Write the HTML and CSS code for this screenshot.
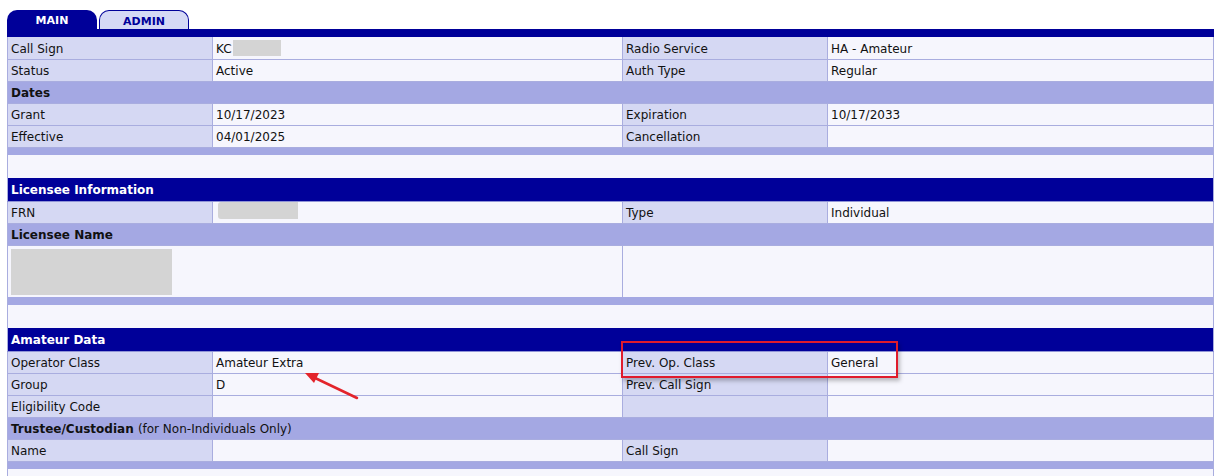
FILE: index.html
```html
<!DOCTYPE html>
<html>
<head>
<meta charset="utf-8">
<link rel="stylesheet" href="styles.css">
</head>
<body>
<div class="page">
  <div class="tabs">
    <div class="tab tab-active">MAIN</div>
    <div class="tab tab-inactive">ADMIN</div>
  </div>
  <div class="topbar"></div>
  <table class="lic">
    <colgroup>
      <col class="c1"><col class="c2"><col class="c3"><col class="c4">
    </colgroup>
    <tr><td class="lbl">Call Sign</td><td class="val">KC<span class="redact r-call"></span></td><td class="lbl">Radio Service</td><td class="val">HA - Amateur</td></tr>
    <tr><td class="lbl">Status</td><td class="val">Active</td><td class="lbl">Auth Type</td><td class="val">Regular</td></tr>
    <tr><td class="sub" colspan="4">Dates</td></tr>
    <tr><td class="lbl">Grant</td><td class="val">10/17/2023</td><td class="lbl">Expiration</td><td class="val">10/17/2033</td></tr>
    <tr><td class="lbl">Effective</td><td class="val">04/01/2025</td><td class="lbl">Cancellation</td><td class="val"></td></tr>
    <tr class="strip"><td colspan="4"></td></tr>
    <tr class="gap"><td colspan="4"></td></tr>
    <tr><td class="head" colspan="4">Licensee Information</td></tr>
    <tr><td class="lbl">FRN</td><td class="val"><span class="redact r-frn"></span></td><td class="lbl">Type</td><td class="val">Individual</td></tr>
    <tr><td class="sub" colspan="4">Licensee Name</td></tr>
    <tr class="tall"><td class="val namecell" colspan="2"><span class="redact r-name"></span></td><td class="val" colspan="2"></td></tr>
    <tr class="strip"><td colspan="4"></td></tr>
    <tr class="gap"><td colspan="4"></td></tr>
    <tr><td class="head" colspan="4">Amateur Data</td></tr>
    <tr><td class="lbl">Operator Class</td><td class="val">Amateur Extra</td><td class="lbl">Prev. Op. Class</td><td class="val">General</td></tr>
    <tr><td class="lbl">Group</td><td class="val">D</td><td class="lbl">Prev. Call Sign</td><td class="val"></td></tr>
    <tr><td class="lbl">Eligibility Code</td><td class="val"></td><td class="lbl"></td><td class="val"></td></tr>
    <tr><td class="sub" colspan="4">Trustee/Custodian <span class="norm">(for Non-Individuals Only)</span></td></tr>
    <tr><td class="lbl">Name</td><td class="val"></td><td class="lbl">Call Sign</td><td class="val"></td></tr>
    <tr class="strip"><td colspan="4"></td></tr>
    <tr class="gap"><td colspan="4"></td></tr>
  </table>
  <div class="highlight"></div>
  <svg class="arrow" width="80" height="40" viewBox="0 0 80 40">
    <line x1="58" y1="30" x2="14" y2="9" stroke="#e3242b" stroke-width="2.5" stroke-linecap="round"/>
    <polygon points="6,5 20,5 15,15" fill="#e3242b"/>
  </svg>
</div>
</body>
</html>
```
FILE: styles.css
```css
html, body {
  margin: 0;
  padding: 0;
  background: #ffffff;
}
body {
  font-family: "DejaVu Sans", Verdana, sans-serif;
  font-size: 12px;
  color: #111111;
}
.page {
  position: relative;
  padding: 10px 9px 0 7px;
}
.tabs {
  display: flex;
  gap: 2px;
  height: 19px;
}
.tab {
  box-sizing: border-box;
  width: 90px;
  height: 19px;
  border-radius: 10px 10px 0 0;
  font-family: "DejaVu Sans", Verdana, sans-serif;
  font-weight: bold;
  font-size: 11px;
  line-height: 22px;
  text-align: center;
}
.tab-active {
  background: #000099;
  color: #ffffff;
}
.tab-inactive {
  background: #d5d9f5;
  color: #000099;
  border: 1px solid #000099;
  border-bottom: none;
  line-height: 21px;
}
.topbar {
  height: 8px;
  background: #000099;
}
.lic {
  width: 100%;
  border-collapse: collapse;
  table-layout: fixed;
  border-left: 1px solid #a9addf;
  border-right: 1px solid #a9addf;
}
.c1 { width: 205px; }
.c2 { width: 410px; }
.c3 { width: 205px; }
.c4 { width: auto; }
.lic td {
  height: 22px;
  padding: 2px 0 0 3px;
  border-bottom: 1px solid #a9addf;
  vertical-align: middle;
  white-space: nowrap;
  overflow: hidden;
  box-sizing: border-box;
}
.lbl {
  background: #d5d8f3;
  border-right: 1px solid #a9addf;
}
.val {
  background: #f6f6fd;
  border-right: 1px solid #a9addf;
}
.sub {
  background: #a4a8e3;
  font-weight: bold;
}
.sub .norm {
  font-weight: normal;
}
.head {
  background: #000099;
  color: #ffffff;
  font-weight: bold;
}
.lic td.head {
  height: 23px;
  border-bottom: 1px solid #8f93d6;
}
.strip td {
  background: #a4a8e3;
}
.lic .strip td {
  height: 8px;
  padding: 0;
  border-bottom: none;
}
.gap td {
  background: #f6f6fd;
}
.lic .gap td {
  height: 23px;
  padding: 0;
  border-bottom: none;
}
.lic .tall td {
  height: 52px;
  padding: 0;
  border-bottom: none;
  vertical-align: top;
}
.lic .tall td.namecell {
  padding: 3px 0 0 3px;
}
.redact {
  display: inline-block;
  background: #d4d4d4;
  vertical-align: middle;
}
.r-call {
  width: 48px;
  height: 16px;
  margin-left: 1px;
  margin-top: -2px;
}
.r-frn {
  width: 80px;
  height: 17px;
  margin-top: -6px;
  margin-left: 2px;
  border-radius: 3px 0 0 3px;
}
.r-name {
  width: 161px;
  height: 46px;
  vertical-align: top;
}
.highlight {
  position: absolute;
  left: 621px;
  top: 341px;
  width: 273px;
  height: 33px;
  border: 2px solid #e01b2c;
  box-shadow: 2px 3px 4px rgba(0, 0, 0, 0.25);
}
.arrow {
  position: absolute;
  left: 299px;
  top: 368px;
}
```
